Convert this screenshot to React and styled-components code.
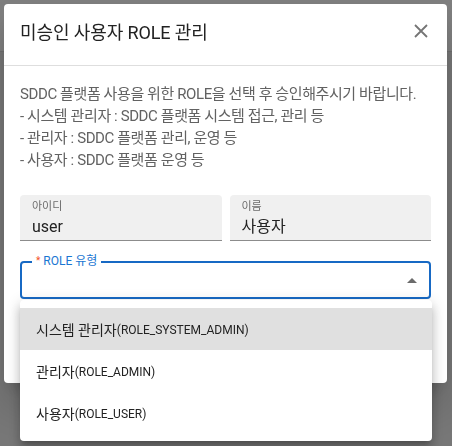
import React from 'react';
import styled, {createGlobalStyle} from "styled-components";

const GlobalStyle = createGlobalStyle`
  *, *::before, *::after {
    box-sizing: border-box;
  }
  html, body {
    margin: 0;
    padding: 0;
    width: 452px;
    height: 446px;
    overflow: hidden;
    font-family: Roboto, "Noto Sans CJK KR", sans-serif;
  }
`;

const Page = styled.div`
  width: 452px;
  height: 446px;
  background: #eeeeee;
  display: flex;
  flex-direction: column;
`;

const PageHeader = styled.div`
  height: 52px;
  background: #ffffff;
  border-bottom: 1px solid #dddddd;
`;

const Backdrop = styled.div`
  position: fixed;
  inset: 0;
  background: rgba(0, 0, 0, 0.5);
  padding: 4px;
`;

const Dialog = styled.div`
  width: 443px;
  height: 379px;
  background: #fff;
  border-radius: 4px;
  box-shadow: 0 11px 15px -7px rgba(0,0,0,0.2), 0 24px 38px 3px rgba(0,0,0,0.14);
  display: flex;
  flex-direction: column;
`;

const Header = styled.div`
  height: 62px;
  padding: 16px 16px 0 16px;
  display: flex;
  align-items: flex-start;
  justify-content: space-between;
  border-bottom: 1px solid #dedede;
`;

const Title = styled.h2`
  margin: 0;
  font-size: 18px;
  line-height: 26px;
  font-weight: 400;
  color: #222;
  letter-spacing: -0.1px;
`;

const CloseButton = styled.button`
  border: none;
  background: none;
  padding: 0;
  margin-top: 1px;
  width: 20px;
  height: 20px;
  display: flex;
  align-items: center;
  justify-content: center;
  cursor: pointer;
`;

const Body = styled.div`
  padding: 17px 16px 0;
  display: flex;
  flex-direction: column;
`;

const Description = styled.div`
  font-size: 15px;
  line-height: 22px;
  color: #626262;
  letter-spacing: -0.4px;
`;

const FieldRow = styled.div`
  margin-top: 24px;
  display: grid;
  grid-template-columns: 1fr 1fr;
  gap: 8px;
`;

const FilledField = styled.div`
  height: 46px;
  background: #f0f0f0;
  border-radius: 4px 4px 0 0;
  border-bottom: 1px solid #8c8c8c;
  padding: 5px 12px 0;
  display: flex;
  flex-direction: column;
`;

const FieldLabel = styled.span`
  font-size: 11px;
  line-height: 14px;
  color: #6b6b6b;
`;

const FieldValue = styled.span`
  margin-top: 3px;
  font-size: 16px;
  line-height: 20px;
  color: #222;
`;

const SelectBox = styled.div`
  position: relative;
  margin-top: 20px;
  height: 38px;
  border: 2px solid #1769c4;
  border-radius: 4px;
  display: flex;
  align-items: center;
  justify-content: flex-end;
  padding-right: 12px;
`;

const Legend = styled.span`
  position: absolute;
  top: -9px;
  left: 10px;
  padding: 0 4px;
  background: #fff;
  font-size: 12px;
  line-height: 14px;
  color: #1976d2;
`;

const Required = styled.span`
  color: #f4511e;
  font-size: 10px;
  margin-right: 3px;
  vertical-align: top;
`;

const Menu = styled.ul`
  position: fixed;
  left: 20px;
  top: 300px;
  width: 412px;
  margin: 0;
  padding: 8px 0 7px;
  list-style: none;
  background: #fff;
  border-radius: 4px;
  box-shadow: 0 5px 5px -3px rgba(0,0,0,0.2), 0 8px 10px 1px rgba(0,0,0,0.14), 0 3px 14px 2px rgba(0,0,0,0.12);
`;

const MenuItem = styled.li`
  height: 42px;
  padding: 0 16px;
  display: flex;
  align-items: center;
  background: ${p => p.selected ? '#e0e0e0' : 'transparent'};
  font-size: 14px;
  color: #222;
`;

const Code = styled.span`
  font-size: 12px;
  margin-top: 2px;
`;

const items = [
    {name: '시스템 관리자', code: 'ROLE_SYSTEM_ADMIN'},
    {name: '관리자', code: 'ROLE_ADMIN'},
    {name: '사용자', code: 'ROLE_USER'},
];

export default function App() {
    return (
        <>
            <GlobalStyle/>
            <Page>
                <PageHeader/>
            </Page>
            <Backdrop>
                <Dialog>
                    <Header>
                        <Title>미승인 사용자 ROLE 관리</Title>
                        <CloseButton>
                            <svg width="14" height="14" viewBox="0 0 14 14">
                                <path d="M1 1 L13 13 M13 1 L1 13" stroke="#757575" strokeWidth="1.8" fill="none"/>
                            </svg>
                        </CloseButton>
                    </Header>
                    <Body>
                        <Description>
                            SDDC 플랫폼 사용을 위한 ROLE을 선택 후 승인해주시기 바랍니다.<br/>
                            - 시스템 관리자 : SDDC 플랫폼 시스템 접근, 관리 등<br/>
                            - 관리자 : SDDC 플랫폼 관리, 운영 등<br/>
                            - 사용자 : SDDC 플랫폼 운영 등
                        </Description>
                        <FieldRow>
                            <FilledField>
                                <FieldLabel>아이디</FieldLabel>
                                <FieldValue>user</FieldValue>
                            </FilledField>
                            <FilledField>
                                <FieldLabel>이름</FieldLabel>
                                <FieldValue>사용자</FieldValue>
                            </FilledField>
                        </FieldRow>
                        <SelectBox>
                            <Legend><Required>*</Required>ROLE 유형</Legend>
                            <svg width="10" height="5" viewBox="0 0 10 5">
                                <path d="M0 5 L5 0 L10 5 Z" fill="#6b6b6b"/>
                            </svg>
                        </SelectBox>
                    </Body>
                </Dialog>
            </Backdrop>
            <Menu>
                {items.map((m, i) =>
                    <MenuItem key={m.code} selected={i === 0}>
                        {m.name}<Code>({m.code})</Code>
                    </MenuItem>
                )}
            </Menu>
        </>
    );
}
